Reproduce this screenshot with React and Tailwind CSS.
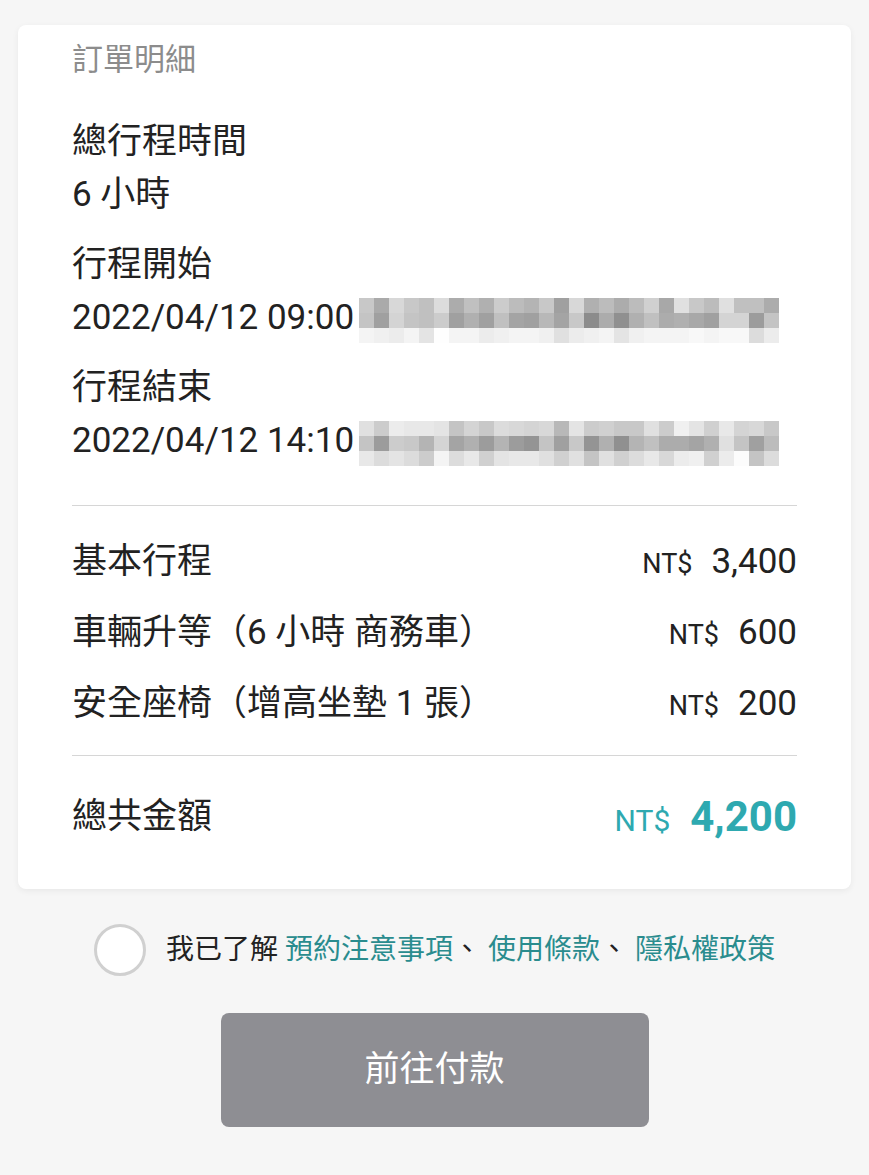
import React from "react";

const blur1 = [
  ["c8","aa","d8","c8","c0","dc","ac","c0","b0","cc","bc","b4","c8","a0","d8","b0","bc","ac","bc","d0","a8","e0","c8","bc","e0","c0","c0","ac"],
  ["c4","a0","d4","c4","c0","cc","a0","b0","a0","c0","a4","a0","b8","a4","c8","8c","ac","90","b0","c0","ac","b0","a8","a0","d4","d4","9c","c4"],
  ["f4","f0","ec","f4","e4","fe","f4","f4","ec","f0","f4","f4","f0","e0","ec","f0","f4","e4","f0","f4","f4","f4","f8","f4","f8","f8","dc","ec"],
];
const blur2 = [
  ["e0","cc","ec","e8","e8","e4","c4","d4","c8","dc","d8","d4","d8","b8","e4","cc","d0","c8","c8","e0","cc","f0","e4","d0","e8","d4","d8","c8"],
  ["c4","9c","cc","c8","b4","d4","a4","b0","9c","b4","9c","94","c4","a0","c8","94","b0","90","b4","c0","ac","ac","a4","b0","e0","c4","a0","bc"],
  ["e8","dc","e4","dc","cc","f4","dc","e8","d0","e4","e8","e8","e0","d0","e0","c4","e0","d0","dc","e8","d8","ec","f0","d0","ec","fc","c4","dc"],
];

function Blur({ data }) {
  return (
    <div className="ml-[5px] mt-[6px] flex flex-col">
      {data.map((row, i) => (
        <div key={i} className="flex">
          {row.map((v, j) => (
            <div
              key={j}
              className="h-[15px] w-[15px]"
              style={{ backgroundColor: `#${v}${v}${v}` }}
            />
          ))}
        </div>
      ))}
    </div>
  );
}

function Price({ value }) {
  return (
    <div className="flex items-baseline leading-none">
      <span className="mr-[19px] text-[27px]">NT$</span>
      <span className="text-[35px]">{value}</span>
    </div>
  );
}

function Row({ label, value }) {
  return (
    <div className="flex h-[71px] items-center justify-between pt-[3px]">
      <span className="leading-none">{label}</span>
      <Price value={value} />
    </div>
  );
}

export default function App() {
  return (
    <div
      className="min-h-[1175px] w-full bg-[#f6f6f6] pt-[25px] text-[#222222]"
      style={{ fontFamily: "Roboto, 'Noto Sans CJK TC', sans-serif" }}
    >
      <div className="mx-[18px] rounded-[8px] bg-white px-[54px] pt-[15px] pb-[37px] shadow-[0_2px_6px_rgba(0,0,0,0.06)]">
        <div className="text-[31px] leading-[40px] text-[#8c8c8c]">訂單明細</div>

        <div className="mt-[35px] text-[35px] leading-[53px]">
          <div>總行程時間</div>
          <div>6 小時</div>
          <div className="mt-[17px]">行程開始</div>
          <div className="flex items-center">
            <span>2022/04/12 09:00</span>
            <Blur data={blur1} />
          </div>
          <div className="mt-[17px]">行程結束</div>
          <div className="flex items-center">
            <span>2022/04/12 14:10</span>
            <Blur data={blur2} />
          </div>
        </div>

        <div className="mt-[38px] h-px bg-[#d6d6d6]" />

        <div className="my-[18px] text-[35px]">
          <Row label="基本行程" value="3,400" />
          <Row label="車輛升等（6 小時 商務車）" value="600" />
          <Row label="安全座椅（增高坐墊 1 張）" value="200" />
        </div>

        <div className="h-px bg-[#d6d6d6]" />

        <div className="mt-[25px] flex h-[71px] items-center justify-between">
          <span className="text-[35px] leading-none">總共金額</span>
          <div className="flex items-baseline leading-none text-[#2ea9b0]">
            <span className="mr-[20px] text-[30px]">NT$</span>
            <span className="text-[42px] font-bold">4,200</span>
          </div>
        </div>
      </div>

      <div className="mt-[35px] flex items-center justify-center">
        <div className="h-[52px] w-[52px] rounded-full border-[3px] border-[#d0d0d0] bg-white" />
        <div className="ml-[20px] text-[28px] leading-[40px]">
          <span>我已了解 </span>
          <span className="text-[#2a8c8e]">預約注意事項</span>
          <span>、 </span>
          <span className="text-[#2a8c8e]">使用條款</span>
          <span>、 </span>
          <span className="text-[#2a8c8e]">隱私權政策</span>
        </div>
      </div>

      <div className="mt-[37px] flex justify-center">
        <button className="h-[114px] w-[428px] rounded-[8px] bg-[#8e8e93] text-[35px] text-white">
          前往付款
        </button>
      </div>
    </div>
  );
}
